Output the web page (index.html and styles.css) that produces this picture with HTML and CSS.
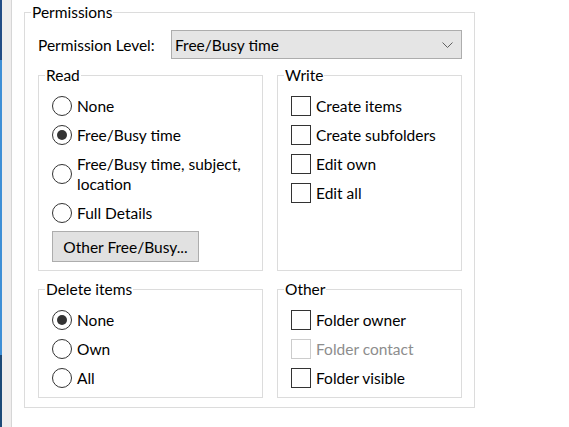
FILE: index.html
```html
<!DOCTYPE html>
<html lang="en">
<head>
  <meta charset="UTF-8">
  <title>Permissions</title>
  <link rel="stylesheet" href="styles.css">
</head>
<body>
  <div class="window">
    <div class="side"></div>
    <main class="pane">
      <fieldset class="group permissions">
        <legend>Permissions</legend>
        <div class="level-row">
          <label class="level-label" for="level">Permission Level:</label>
          <div class="dropdown" id="level">
            <span>Free/Busy time</span>
            <svg class="chevron" width="11" height="6" viewBox="0 0 11 6">
              <path d="M0.5 0.5 L5.5 5.5 L10.5 0.5" fill="none" stroke="#606060" stroke-width="1"/>
            </svg>
          </div>
        </div>

        <div class="groups">
          <fieldset class="group">
            <legend>Read</legend>
            <div class="options">
              <label class="option"><input type="radio" name="read"> None</label>
              <label class="option"><input type="radio" name="read" checked> Free/Busy time</label>
              <label class="option"><input type="radio" name="read"> <span>Free/Busy time, subject,<br>location</span></label>
              <label class="option"><input type="radio" name="read"> Full Details</label>
              <button class="btn" type="button">Other Free/Busy...</button>
            </div>
          </fieldset>

          <fieldset class="group">
            <legend>Write</legend>
            <div class="options">
              <label class="option"><input type="checkbox"> Create items</label>
              <label class="option"><input type="checkbox"> Create subfolders</label>
              <label class="option"><input type="checkbox"> Edit own</label>
              <label class="option"><input type="checkbox"> Edit all</label>
            </div>
          </fieldset>

          <fieldset class="group lower">
            <legend>Delete items</legend>
            <div class="options">
              <label class="option"><input type="radio" name="del" checked> None</label>
              <label class="option"><input type="radio" name="del"> Own</label>
              <label class="option"><input type="radio" name="del"> All</label>
            </div>
          </fieldset>

          <fieldset class="group lower">
            <legend>Other</legend>
            <div class="options">
              <label class="option"><input type="checkbox"> Folder owner</label>
              <label class="option disabled"><input type="checkbox" disabled> Folder contact</label>
              <label class="option"><input type="checkbox"> Folder visible</label>
            </div>
          </fieldset>
        </div>
      </fieldset>
    </main>
  </div>
</body>
</html>
```

FILE: styles.css
```css
body {
  margin: 0;
  font-family: Lato, "Noto Sans", sans-serif;
  font-size: 15.5px;
  color: #000;
  background-color: #fff;
}
.window {
  display: flex;
  min-height: 427px;
}
.side {
  width: 11px;
  flex: none;
  border-right: 1px solid #d6d6d6;
  background: linear-gradient(#234d86 0 60px, #3f8fd6 60px 355px, #1d4a78 355px) left / 2px 100% no-repeat, #efeded;
}
.pane {
  flex: 1;
}
.group {
  margin: 0;
  min-width: 0;
  padding: 11px 13px 8px;
  border: 1px solid #dcdcdc;
}
.group legend {
  padding: 0 1px;
  margin-left: -7px;
  line-height: 20px;
}
.group.lower {
  padding-bottom: 9px;
}
.permissions {
  width: 451px;
  box-sizing: border-box;
  margin: 2px 0 0 12px;
  padding: 8px 12px 9px 13px;
}
.level-row {
  display: flex;
  align-items: center;
}
.level-label {
  width: 133px;
  flex: none;
}
.dropdown {
  flex: 1;
  height: 29px;
  box-sizing: border-box;
  display: flex;
  align-items: center;
  justify-content: space-between;
  padding: 0 8px 0 3px;
  background-color: #e5e5e5;
  border: 1px solid #adadad;
}
.groups {
  display: grid;
  grid-template-columns: 225px 185px;
  column-gap: 14px;
  row-gap: 8px;
  margin-top: 6px;
}
.options {
  display: flex;
  flex-direction: column;
  gap: 9px;
}
.option {
  display: flex;
  align-items: center;
  gap: 5px;
  line-height: 20px;
}
.option input {
  appearance: none;
  flex: none;
  width: 20px;
  height: 20px;
  margin: 0;
  box-sizing: border-box;
  border: 1px solid #333;
  background-color: #fff;
  display: grid;
  place-content: center;
}
.option input[type="radio"] {
  border-radius: 50%;
}
.option input[type="radio"]:checked::before {
  content: "";
  width: 10px;
  height: 10px;
  border-radius: 50%;
  background-color: #333;
}
.option.disabled {
  color: #8d8d8d;
}
.option input:disabled {
  border-color: #cccccc;
}
.btn {
  width: 147px;
  height: 31px;
  margin-top: -1px;
  font-family: inherit;
  font-size: 15.5px;
  color: #000;
  background-color: #e1e1e1;
  border: 1px solid #adadad;
  padding: 0;
}
```
